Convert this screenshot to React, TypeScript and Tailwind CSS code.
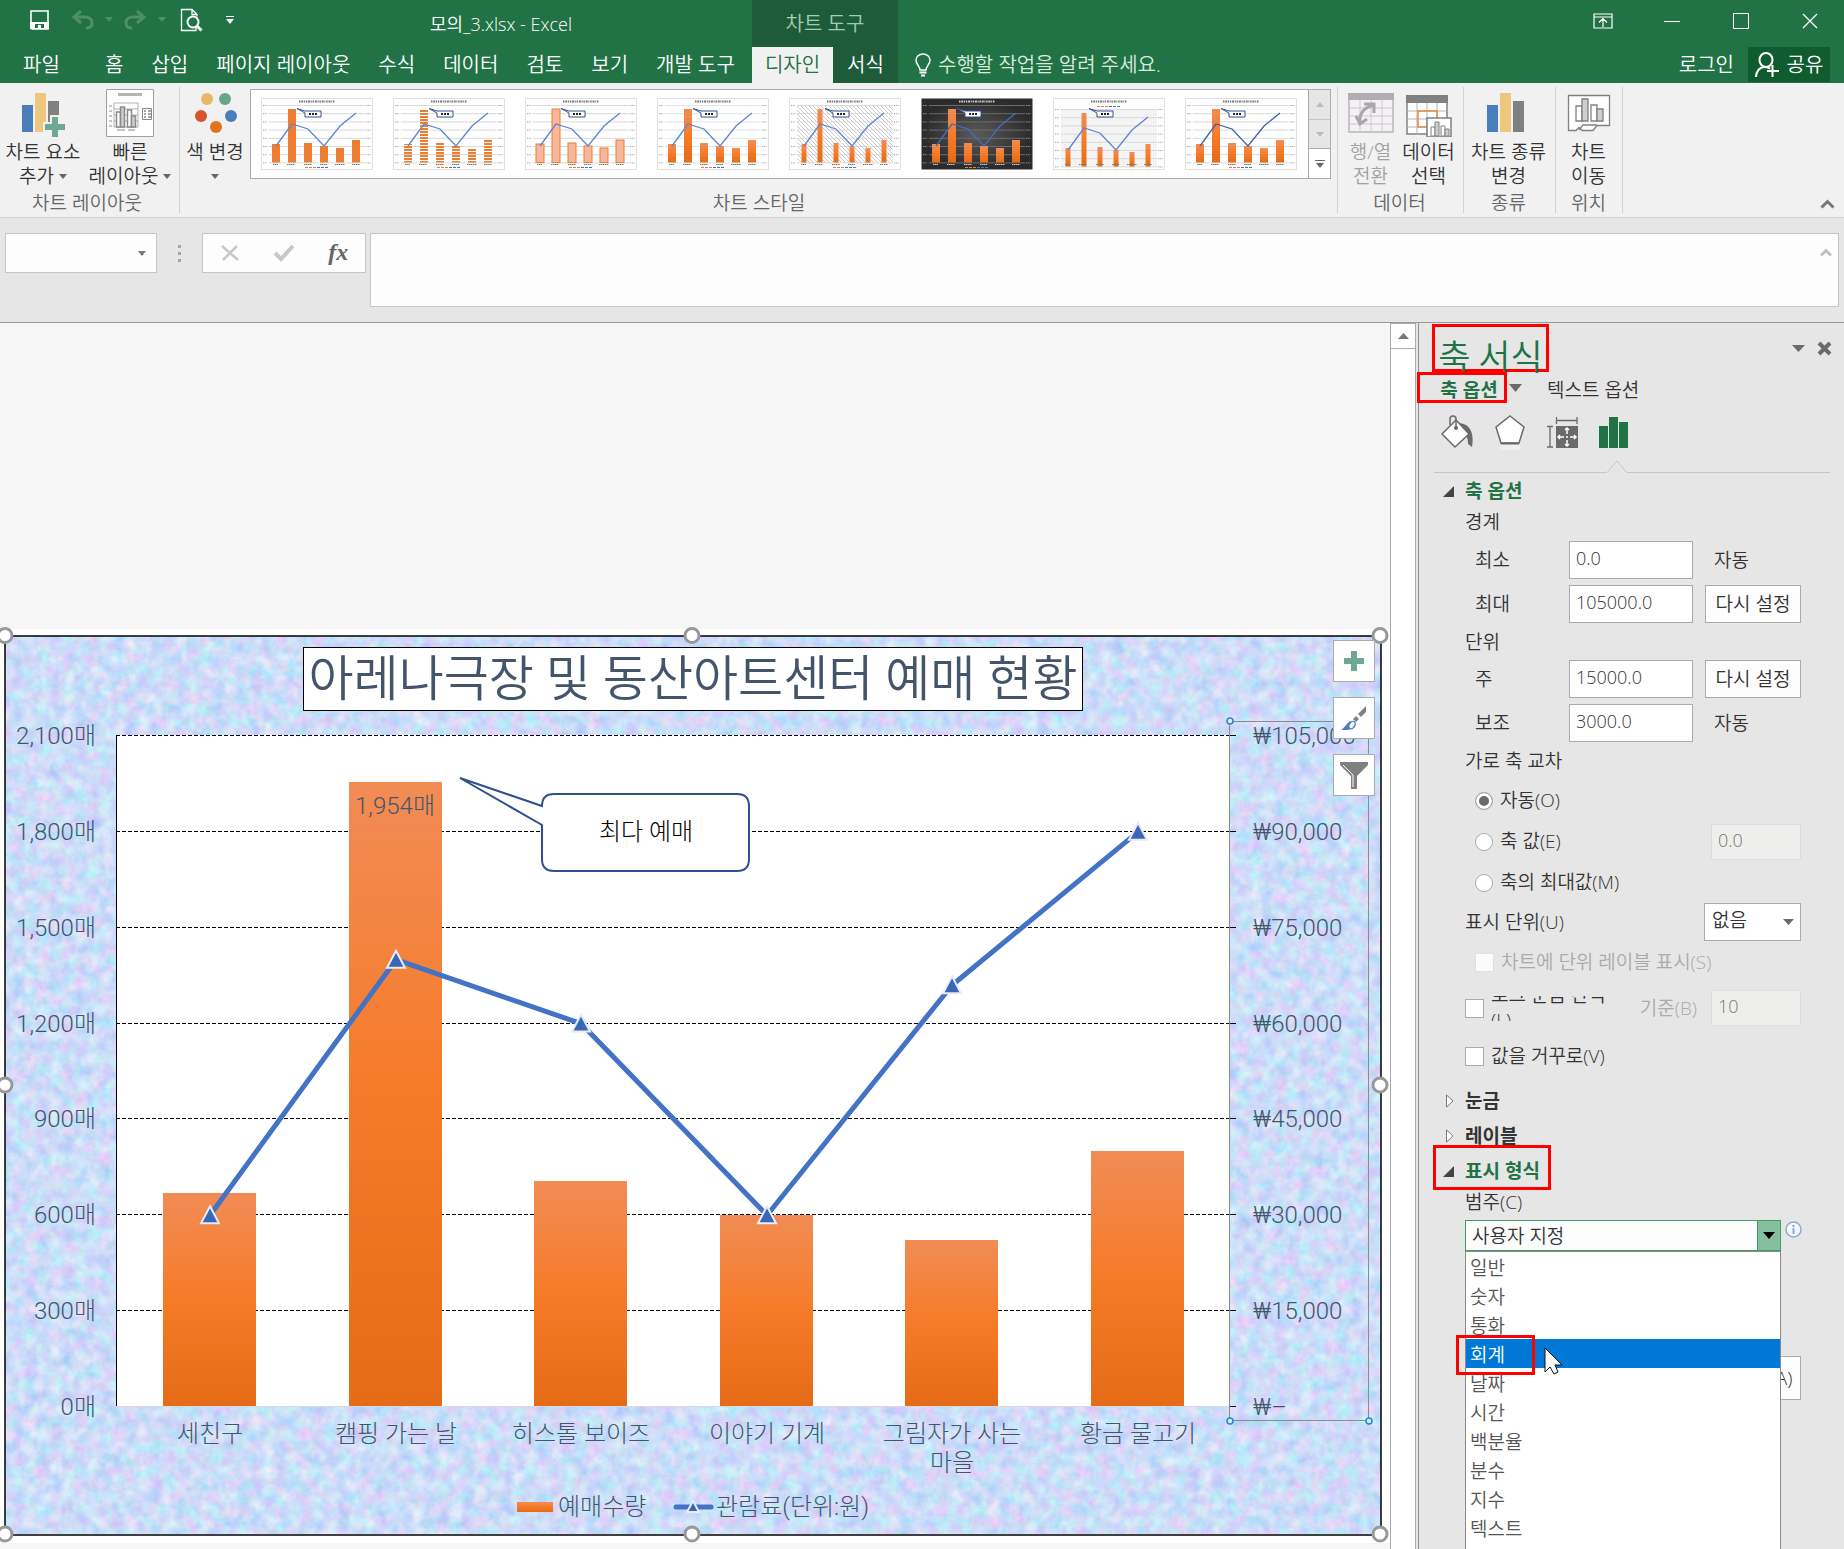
import { ReactNode } from 'react';

const tabs = ['홈', '삽입', '페이지 레이아웃', '수식', '데이터', '검토', '보기', '개발 도구'];

const categories = [
  { name: ['세친구'], qty: 667, fee: 30000 },
  { name: ['캠핑 가는 날'], qty: 1954, fee: 70000 },
  { name: ['히스톨 보이즈'], qty: 704, fee: 60000 },
  { name: ['이야기 기계'], qty: 598, fee: 30000 },
  { name: ['그림자가 사는', '마을'], qty: 520, fee: 66000 },
  { name: ['황금 물고기'], qty: 798, fee: 90000 },
];

const leftAxis = ['2,100매', '1,800매', '1,500매', '1,200매', '900매', '600매', '300매', '0매'];
const rightAxis = ['₩105,000', '₩90,000', '₩75,000', '₩60,000', '₩45,000', '₩30,000', '₩15,000', '₩–'];

const formats = ['일반', '숫자', '통화', '회계', '날짜', '시간', '백분율', '분수', '지수', '텍스트'];

// plot area inside the chart canvas
const plot = { left: 116, right: 1230, top: 106, bottom: 777 };
const plotHeight = plot.bottom - plot.top;
const centerX = (i: number) => 209 + Math.round(i * 185.5);
const qtyY = (v: number) => plot.bottom - (v / 2100) * plotHeight;
const feeY = (v: number) => plot.bottom - (v / 105000) * plotHeight;

function Caret({ className = '' }: { className?: string }) {
  return (
    <svg className={`shrink-0 ${className}`} width="8" height="5" viewBox="0 0 8 5" fill="currentColor" aria-hidden="true">
      <path d="M0 0h8L4 5z" />
    </svg>
  );
}

/* ---------- title bar ---------- */

function QuickAccess() {
  return (
    <div className="flex w-[250px] items-center pl-[28px] text-white">
      <button aria-label="저장" className="w-[43px]">
        <svg width="22" height="22" viewBox="0 0 22 22" fill="none">
          <path d="M3 2h17v18H4l-1-1z" stroke="#fff" strokeWidth="1.600" />
          <path d="M2 13h19v7H2z" fill="#fff" />
          <path d="M7 15h9v4H7z" fill="#217346" />
          <path d="M10 16h3v4h-3z" fill="#fff" />
        </svg>
      </button>
      <button aria-label="실행 취소" className="flex w-[53px] items-center gap-[11px] text-[#4d8f69]">
        <svg width="23" height="20" viewBox="0 0 23 20" fill="none" stroke="currentColor" strokeWidth="3">
          <path d="M10 1L3 7l7 6M4 7h10c4 0 7 2 7 6s-3 5-6 5" />
        </svg>
        <Caret />
      </button>
      <button aria-label="다시 실행" className="flex w-[56px] items-center gap-[11px] text-[#4d8f69]">
        <svg width="23" height="20" viewBox="0 0 23 20" fill="none" stroke="currentColor" strokeWidth="3">
          <path d="M13 1l7 6-7 6M19 7H9c-4 0-7 2-7 6s3 5 6 5" />
        </svg>
        <Caret />
      </button>
      <button aria-label="인쇄 미리 보기" className="w-[46px]">
        <svg width="23" height="24" viewBox="0 0 23 24" fill="none" stroke="#fff">
          <path d="M16 19v3.500H1.500V1.500H12l5 5v2M12 1.500v5h5" strokeWidth="1.300" />
          <circle cx="13" cy="14" r="5.500" fill="#217346" strokeWidth="2" />
          <path d="M17 18l4.500 4.500" strokeWidth="3" />
        </svg>
      </button>
      <button aria-label="빠른 실행 도구 모음 사용자 지정">
        <svg width="8" height="8" viewBox="0 0 8 8" fill="#fff">
          <path d="M0 0h8v1H0zM0 3h8L4 8z" />
        </svg>
      </button>
    </div>
  );
}

function WindowControls() {
  const cell = 'flex w-[69px] items-center justify-center';
  return (
    <div className="ml-auto flex pb-[6px]">
      <button aria-label="리본 메뉴 표시 옵션" className={cell}>
        <svg width="20" height="16" viewBox="0 0 20 16" fill="none" stroke="#fff" strokeWidth="1.200">
          <path d="M1 1h18v14H1zM1 4h18M10 14V6M6 9.500L10 5.500l4 4" />
        </svg>
      </button>
      <button aria-label="최소화" className={cell}>
        <svg width="16" height="16" viewBox="0 0 16 16" stroke="#fff"><path d="M0 8.500h16" /></svg>
      </button>
      <button aria-label="최대화" className={cell}>
        <svg width="16" height="16" viewBox="0 0 16 16" fill="none" stroke="#fff"><path d="M.5.5h15v15H.5z" /></svg>
      </button>
      <button aria-label="닫기" className={cell}>
        <svg width="16" height="16" viewBox="0 0 16 16" stroke="#fff" strokeWidth="1.300"><path d="M1 1l14 14M15 1L1 15" /></svg>
      </button>
    </div>
  );
}

function TitleBar() {
  return (
    <header className="bg-[#217346] text-white">
      <div className="flex h-[47px] items-stretch">
        <div className="flex w-[752px]">
          <div className="flex pb-2"><QuickAccess /></div>
          <h1 className="flex flex-1 items-center justify-center pt-[2px] text-[18px]">모의_3.xlsx - Excel</h1>
        </div>
        <div className="flex w-[146px] items-center justify-center bg-[#1e5c39] pt-px text-[20px] text-[#a3cdb2]">차트 도구</div>
        <WindowControls />
      </div>
      <div className="flex h-9 text-[20px]">
        <nav className="flex w-[752px] justify-between pr-1">
          <button className="mr-[7px] w-[83px]">파일</button>
          {tabs.map((tab) => (
            <button key={tab} className="px-[13px] whitespace-nowrap">{tab}</button>
          ))}
        </nav>
        <button className="w-[81px] bg-[#f1f1f1] text-[#217346]">디자인</button>
        <button className="w-[65px] bg-[#1e5c39]">서식</button>
        <button className="flex items-center gap-[6px] pl-4 text-[#d9eadf]">
          <svg width="18" height="24" viewBox="0 0 18 24" fill="none" stroke="#fff" strokeWidth="1.500">
            <path d="M6 17c0-4-4-5-4-10a7 6 0 0 1 14 0c0 5-4 6-4 10z" />
            <path d="M5.500 19.500h7M7 22.500h4" strokeWidth="2" />
          </svg>
          수행할 작업을 알려 주세요.
        </button>
        <div className="ml-auto flex pr-[14px]">
          <button className="px-[14px]">로그인</button>
          <button className="flex h-[35px] w-[82px] items-center justify-center gap-2 bg-[#0f5c2f]">
            <svg width="24" height="26" viewBox="0 0 24 26" fill="none" stroke="#fff" strokeWidth="2">
              <ellipse cx="11" cy="8" rx="6.500" ry="7" />
              <path d="M1 25c0-6 4-10 9-10 2 0 4 .5 5 2M17.500 13v12M12 19h12" />
            </svg>
            공유
          </button>
        </div>
      </div>
    </header>
  );
}

/* ---------- ribbon ---------- */

function BarsIcon({ plus = false }: { plus?: boolean }) {
  return (
    <svg width="46" height="46" viewBox="0 0 46 46" aria-hidden="true">
      <path d="M2 14h11v27H2z" fill="#4a7ebb" />
      <path d="M15 2h11v39H15z" fill="#edc77d" />
      <path d="M28 10h11v31H28z" fill="#808080" />
      {plus && <path d="M31 25h8v7h7v8h-7v7h-8v-7h-7v-8h7z" fill="#6fa890" stroke="#f1f1f1" strokeWidth="2" />}
    </svg>
  );
}

function LayoutIcon() {
  return (
    <svg width="48" height="48" viewBox="0 0 48 48" fill="none" stroke="#8a8a8a">
      <path d="M.5.5h47v47H.5z" fill="#fff" stroke="#a0a0a0" />
      <path d="M12 4h24v3H12z" fill="#b5b5b5" stroke="none" />
      <path d="M8 14h24v24H8zM8 20h24M8 26h24M8 32h24" stroke="#b0b0b0" />
      <path d="M10.500 23h4v15h-4zM21.500 21h4v17h-4z" fill="#fff" strokeWidth="1.500" />
      <path d="M14.500 18h4v20h-4zM25.500 27h4v11h-4z" fill="#cfcfcf" strokeWidth="1.500" />
      <path d="M3 17h3M3 22h3M3 27h3M3 32h3M3 37h3M11 41h8M22 41h7" strokeWidth="1" />
      <path d="M36.500 19.500h9v11h-9z" fill="#fff" />
      <path d="M38 22h2M42 22h3M38 25h2M42 25h3M38 28h2M42 28h3" strokeWidth="1.500" />
    </svg>
  );
}

function ColorsIcon() {
  return (
    <svg width="44" height="46" viewBox="0 0 44 46">
      <circle cx="14" cy="8" r="6" fill="#e9b765" />
      <circle cx="32" cy="8" r="6" fill="#66a58c" />
      <circle cx="8" cy="25" r="6" fill="#d9532c" />
      <circle cx="38" cy="25" r="6" fill="#4a7ebb" />
      <circle cx="23" cy="36" r="6" fill="#e27318" />
    </svg>
  );
}

function SwapIcon() {
  return (
    <svg width="46" height="46" viewBox="0 0 46 46" fill="none">
      <path d="M1 4h44v37H1z" fill="#f5f0f6" stroke="#b9b5ba" strokeWidth="1.500" />
      <path d="M0 2h46v7H0z" fill="#b1aeb1" />
      <path d="M1 17h44M1 25h44M1 33h44M12 9v32M23 9v32M34 9v32" stroke="#cdc6ce" />
      <path d="M12 32c-1-9 3-15 13-18" stroke="#aaa6aa" strokeWidth="3" />
      <path d="M16 13h10v9M8 25l4 8 7-5" stroke="#aaa6aa" strokeWidth="3" />
    </svg>
  );
}

function SelectDataIcon() {
  return (
    <svg width="46" height="46" viewBox="0 0 46 46" fill="none">
      <path d="M1 5h40v39H1z" fill="#fff" stroke="none" />
      <path d="M1 5h40v38H1z" stroke="#808080" strokeWidth="1.500" />
      <path d="M0 4h42v8H0z" fill="#808080" />
      <path d="M1 20h40M1 28h40M1 36h40M11 12v31M21 12v31M31 12v31" stroke="#b5b5b5" />
      <path d="M12 20h19v16H12z" stroke="#e38b41" strokeWidth="1.500" />
      <path d="M21 27h24v19H21z" fill="#fff" stroke="#808080" strokeWidth="1.500" />
      <path d="M25 36h4v9h-4zM35 35h4v10h-4z" fill="#fff" stroke="#808080" />
      <path d="M29 31h4v14h-4zM39 38h4v7h-4z" fill="#cfcfcf" stroke="#808080" />
    </svg>
  );
}

function MoveChartIcon() {
  return (
    <svg width="44" height="46" viewBox="0 0 44 46" fill="none" stroke="#808080" strokeWidth="1.300">
      <path d="M1.500 4.500h41v30H30l-4 5H15l-3-3-3 3H1.500z" fill="#fff" />
      <path d="M12 39l4-5h14" />
      <path d="M9 15h6v15H9zM24 14h6v16h-6z" fill="#fff" />
      <path d="M15 8h6v22h-6zM30 18h6v12h-6z" fill="#cfcfcf" />
    </svg>
  );
}

function RibbonButton({ icon, lines, caret, disabled, className = '' }: {
  icon: ReactNode;
  lines: string[];
  caret?: boolean;
  disabled?: boolean;
  className?: string;
}) {
  return (
    <button
      disabled={disabled}
      className={`flex h-[106px] flex-col items-center text-[19px] leading-6 whitespace-nowrap disabled:text-[#a2a2a2] ${className}`}
    >
      <span className="flex h-[57px] items-end pb-[3px]">{icon}</span>
      <span>{lines[0]}</span>
      <span className="flex h-6 items-center gap-[5px]">
        {lines[1]}
        {caret && <Caret className="text-[#666]" />}
      </span>
    </button>
  );
}

function RibbonGroup({ label, className = '', children }: { label: string; className?: string; children: ReactNode }) {
  return (
    <section className={`relative flex flex-col ${className}`}>
      <div className="flex justify-center">{children}</div>
      <div className="flex h-7 items-center justify-center pt-px text-[19px] text-[#666]">{label}</div>
      <span className="absolute top-1 right-0 bottom-1 w-px bg-[#d2d2d2]" />
    </section>
  );
}

type ThumbStyle = {
  bg?: string;
  grid?: string;
  bar?: string;
  stroke?: string;
  barWidth?: number;
  line?: string;
  plotFill?: string;
  ink?: string;
  legendTop?: boolean;
};

const thumbs: ThumbStyle[] = [
  { bar: '#ed7d31' },
  { bar: 'url(#stripes)' },
  { bar: '#f8b79a', stroke: '#ed7d31' },
  { bar: 'url(#orange)', grid: '#dfe5ee' },
  { bar: 'url(#orange)', barWidth: 5, plotFill: 'url(#hatch)' },
  { bar: 'url(#orange)', bg: 'url(#dark)', grid: '#6b6b6b', line: '#3f6ec4', ink: '#ccc' },
  { bar: 'url(#orange)', barWidth: 5, plotFill: '#f4f4f4', legendTop: true },
  { bar: 'url(#orange)', line: '#3a62ad' },
];

const thumbX = [15, 31, 47, 63, 79, 95];
const thumbTops = [46, 11, 45, 48, 50, 42];
const thumbLine = [48, 26, 31, 48, 28, 15];

function StyleThumb({ style, index }: { style: ThumbStyle; index: number }) {
  const { bg = '#fff', grid = '#d9d9d9', bar, stroke, barWidth = 8, line = '#5b86d6', plotFill = 'none', ink = '#777', legendTop } = style;
  const shift = legendTop ? 4 : 0;
  return (
    <button aria-label={`스타일 ${index + 1}`} className="shrink-0">
      <svg width="112" height="72" viewBox="0 0 112 72" fill="none">
        <rect x="0.500" y="0.500" width="111" height="71" fill={bg} stroke={style.bg ? 'none' : '#e0e0e0'} />
        <path d="M38 3.500h36" stroke={ink} strokeWidth="2" strokeDasharray="1.500 .8 2 .7 1 .8" />
        <rect x="8" y={7 + shift} width="96" height="58" fill={plotFill} />
        {Array.from({ length: 8 }, (_, i) => (
          <g key={i}>
            <path d={`M8 ${7.5 + shift + i * 8.2}h96`} stroke={grid} />
            <path d={`M2 ${7.5 + shift + i * 8.2}h4M105 ${7.5 + shift + i * 8.2}h5`} stroke={ink} strokeDasharray="1 .7" strokeOpacity="0.700" />
          </g>
        ))}
        {thumbX.map((x, i) => (
          <rect key={x} x={x - barWidth / 2} y={thumbTops[i] + shift} width={barWidth} height={64.5 - thumbTops[i]} fill={bar} stroke={stroke} />
        ))}
        <polyline points={thumbX.map((x, i) => `${x},${thumbLine[i] + shift}`).join(' ')} stroke={line} strokeWidth="1.300" />
        <path d="M36 10.500l8 2.500h16v6H44v-4z" fill="#fff" stroke="#2f528f" />
        <path d="M48 16h8" stroke="#222" strokeWidth="2" strokeDasharray="2 1" />
        <path d="M12 66.500h5M26 66.500h8M43 66.500h8M59 66.500h7M74 66.500h10M91 66.500h8" stroke={ink} strokeDasharray="1.500 .5" />
        <path d={legendTop ? 'M44 8.500h11' : 'M44 69.500h11'} stroke="#ed7d31" strokeDasharray="3 1" />
        <path d={legendTop ? 'M56 8.500h12' : 'M56 69.500h12'} stroke="#4472c4" strokeDasharray="3 1" />
      </svg>
    </button>
  );
}

function StyleGallery() {
  return (
    <div className="mt-[6px] mr-[7px] flex h-[90px] flex-1 border border-[#ababab] bg-white">
      <div className="flex min-w-0 flex-1 items-center gap-5 overflow-hidden pl-[10px]">
        {thumbs.map((style, i) => (
          <StyleThumb key={i} style={style} index={i} />
        ))}
      </div>
      <div className="flex w-[22px] flex-col border-l border-[#ababab] text-[#bdbdbd]">
        <button aria-label="위로" className="flex flex-1 items-center justify-center border-b border-[#c6c6c6] bg-[#e6e6e6]">
          <Caret className="rotate-180" />
        </button>
        <button aria-label="아래로" className="flex flex-1 items-center justify-center border-b border-[#ababab] bg-[#e6e6e6]">
          <Caret />
        </button>
        <button aria-label="자세히" className="flex flex-1 items-center justify-center">
          <svg width="10" height="8" viewBox="0 0 10 8" fill="#666"><path d="M0 0h10v1H0zM1 3h8L5 8z" /></svg>
        </button>
      </div>
    </div>
  );
}

function Ribbon() {
  return (
    <div className="flex h-[135px] border-b border-[#d2d2d2] bg-[#f1f1f1] text-[#333]">
      <RibbonGroup label="차트 레이아웃" className="w-[180px] pr-[6px]">
        <RibbonButton className="w-[86px]" icon={<BarsIcon plus />} lines={['차트 요소', '추가']} caret />
        <RibbonButton className="w-[88px]" icon={<LayoutIcon />} lines={['빠른', '레이아웃']} caret />
      </RibbonGroup>
      <RibbonGroup label="차트 스타일" className="min-w-0 flex-1">
        <RibbonButton className="w-[70px] shrink-0" icon={<ColorsIcon />} lines={['색 변경', '']} caret />
        <StyleGallery />
      </RibbonGroup>
      <RibbonGroup label="데이터" className="w-[126px] pr-[3px]">
        <RibbonButton className="w-[58px]" icon={<SwapIcon />} lines={['행/열', '전환']} disabled />
        <RibbonButton className="w-[58px]" icon={<SelectDataIcon />} lines={['데이터', '선택']} />
      </RibbonGroup>
      <RibbonGroup label="종류" className="w-[92px] pr-[3px]">
        <RibbonButton icon={<BarsIcon />} lines={['차트 종류', '변경']} />
      </RibbonGroup>
      <RibbonGroup label="위치" className="w-[67px] pr-[2px]">
        <RibbonButton icon={<MoveChartIcon />} lines={['차트', '이동']} />
      </RibbonGroup>
      <div className="flex w-[221px] items-end justify-end pr-[9px] pb-2">
        <button aria-label="리본 메뉴 축소">
          <svg width="15" height="10" viewBox="0 0 15 10" fill="none" stroke="#777" strokeWidth="3"><path d="M1.500 8.500l6-6 6 6" /></svg>
        </button>
      </div>
    </div>
  );
}

function FormulaBar() {
  return (
    <div className="flex h-[105px] items-start border-b border-[#9a9a9a] bg-[#e6e6e6] px-[5px] pt-[15px]">
      <div className="flex h-10 w-[152px] items-center border border-[#c6c6c6] bg-[#fdfdfd] pr-[10px]">
        <input aria-label="이름 상자" className="w-full min-w-0 bg-transparent px-2 outline-none" />
        <Caret className="text-[#777]" />
      </div>
      <div className="flex h-10 w-[45px] flex-col items-center justify-center gap-1">
        <span className="size-[3px] bg-[#a6a6a6]" />
        <span className="size-[3px] bg-[#a6a6a6]" />
        <span className="size-[3px] bg-[#a6a6a6]" />
      </div>
      <div className="flex h-10 w-[164px] items-center justify-around border border-[#c6c6c6] bg-[#fdfdfd]">
        <button aria-label="취소">
          <svg width="20" height="18" viewBox="0 0 20 18" stroke="#c8c8c8" strokeWidth="2.500"><path d="M2 2l16 14M17 2L3 16" /></svg>
        </button>
        <button aria-label="입력">
          <svg width="22" height="18" viewBox="0 0 22 18" fill="none" stroke="#c8c8c8" strokeWidth="4"><path d="M2 9l6 6L20 2" /></svg>
        </button>
        <button className="pb-[2px] font-['Liberation_Serif',serif] text-[24px] leading-none font-bold text-[#666] italic" aria-label="함수 삽입">fx</button>
      </div>
      <div className="ml-1 flex h-[74px] flex-1 items-start border border-[#c6c6c6] bg-[#fdfdfd]">
        <textarea aria-label="수식 입력줄" className="h-full flex-1 resize-none px-2 outline-none" />
        <button aria-label="수식 입력줄 축소" className="mt-[14px] mr-[6px]">
          <svg width="12" height="9" viewBox="0 0 12 9" fill="none" stroke="#c0c0c0" strokeWidth="3"><path d="M1 7.500l5-5 5 5" /></svg>
        </button>
      </div>
    </div>
  );
}

/* ---------- chart ---------- */

function Marker({ x, y, size = 9 }: { x: number; y: number; size?: number }) {
  return <path d={`M${x} ${y - size}l${size} ${size * 2 - 1}h${-size * 2}z`} fill="#3a66b8" stroke="#e8ecf4" strokeWidth="2" />;
}

function Chart() {
  const fees = categories.map((c, i) => ({ x: centerX(i) + 1, y: feeY(c.fee) + 1 }));
  const handles = [[5, 6.5], [692, 6.5], [1380, 6.5], [5, 456], [1380, 456], [5, 905], [692, 905], [1380, 905]];
  return (
    <svg viewBox="0 0 1390 914" className="block w-full overflow-visible bg-white font-['Roboto','Noto_Sans_CJK_KR',sans-serif]" role="img" aria-label="아레나극장 및 동산아트센터 예매 현황">
      <defs>
        <linearGradient id="orange" x1="0" y1="0" x2="0" y2="1">
          <stop offset="0" stopColor="#f18c55" />
          <stop offset="0.500" stopColor="#f67b28" />
          <stop offset="1" stopColor="#e56b17" />
        </linearGradient>
        <radialGradient id="dark">
          <stop offset="0" stopColor="#5a5a5a" />
          <stop offset="1" stopColor="#2b2b2b" />
        </radialGradient>
        <pattern id="stripes" width="4" height="3" patternUnits="userSpaceOnUse">
          <path d="M0 0h4v2H0z" fill="#ed7d31" />
        </pattern>
        <pattern id="hatch" width="4" height="4" patternUnits="userSpaceOnUse">
          <path d="M0 0l4 4" stroke="#ccc" />
        </pattern>
        {/* bouquet paper texture */}
        <filter id="paper" x="0" y="0" width="100%" height="100%" colorInterpolationFilters="sRGB">
          <feTurbulence type="fractalNoise" baseFrequency="0.080" numOctaves="5" seed="7" />
          <feColorMatrix values="0.380 0 0 0 0.610  0 0.260 0 0 0.735  0 0 0.060 0 0.945  0 0 0 0 1" />
        </filter>
      </defs>

      <rect x="5" y="7" width="1376" height="898" filter="url(#paper)" />
      <rect x="5" y="7" width="1376" height="899" fill="none" stroke="#000" strokeWidth="1.500" />

      <rect x="303.500" y="18.500" width="779" height="63" fill="#fff" stroke="#000" />
      <text x="693" y="67" textAnchor="middle" fontSize="49" fill="#44546a">
        아레나극장 및 동산아트센터 예매 현황
      </text>

      <rect x={plot.left} y={plot.top} width={plot.right - plot.left} height={plotHeight} fill="#fff" />
      <g stroke="#000" strokeDasharray="4 2">
        {leftAxis.slice(0, 7).map((label, i) => (
          <path key={label} d={`M${plot.left} ${Math.round(plot.top + (i * plotHeight) / 7) + 0.5}H1230`} />
        ))}
      </g>
      <path d={`M${plot.left + 0.5} ${plot.top}V${plot.bottom}`} stroke="#000" />
      <path d={`M${plot.left} ${plot.bottom + 0.5}H${plot.right}`} stroke="#d9d9d9" />
      {rightAxis.map((label, i) => (
        <path key={label} d={`M1230 ${Math.round(plot.top + (i * plotHeight) / 7) + 0.5}h6`} stroke="#000" />
      ))}

      {categories.map((c, i) => (
        <rect key={c.qty} x={centerX(i) - 46} y={Math.round(qtyY(c.qty))} width="93" height={plot.bottom - Math.round(qtyY(c.qty))} fill="url(#orange)" />
      ))}
      <polyline points={fees.map((p) => `${p.x},${p.y}`).join(' ')} fill="none" stroke="#4472c4" strokeWidth="5" strokeLinejoin="round" />
      {fees.map((p) => (
        <Marker key={p.x} x={p.x} y={p.y} />
      ))}

      <path
        d="M460 149L542 177q0-12 12-12h183q12 0 12 12v53q0 12-12 12H554q-12 0-12-12V196z"
        fill="#fff"
        stroke="#2f528f"
        strokeWidth="2"
      />

      <g fontSize="24" fill="#44546a" className="font-light">
        {leftAxis.map((label, i) => (
          <text key={label} x="96" y={plot.top + 9 + (i * plotHeight) / 7} textAnchor="end">{label}</text>
        ))}
        {rightAxis.map((label, i) => (
          <text key={label} x="1253" y={plot.top + 9 + (i * plotHeight) / 7}>{label}</text>
        ))}
        {categories.map((c, i) => (
          <text key={c.qty} y="813" textAnchor="middle">
            {c.name.map((line, row) => (
              <tspan key={line} x={centerX(i) + 1} dy={row * 29}>{line}</tspan>
            ))}
          </text>
        ))}
        <text x="395" y="185" textAnchor="middle">1,954매</text>
        <text x="646" y="211" textAnchor="middle" fill="#000">최다 예매</text>
        <rect x="517" y="873" width="36" height="10" fill="url(#orange)" />
        <text x="558" y="886">예매수량</text>
        <path d="M676 878h35" stroke="#4472c4" strokeWidth="5" strokeLinecap="round" />
        <Marker x={693} y={878} size={6} />
        <text x="716" y="886">관람료(단위:원)</text>
      </g>

      {/* selected value axis */}
      <rect x="1229.500" y="92.500" width="139" height="699" fill="none" stroke="#8c8c8c" />
      <g fill="#dbe9f7" stroke="#1e8ad6" strokeWidth="1.500">
        <circle cx="1230" cy="92" r="3" />
        <circle cx="1230" cy="792" r="3" />
        <circle cx="1369" cy="792" r="3" />
      </g>

      {handles.map(([x, y]) => (
        <circle key={`${x}-${y}`} cx={x} cy={y} r="7" fill="#fff" stroke="#999" strokeWidth="3" />
      ))}
    </svg>
  );
}

function ChartButtons() {
  const box = 'flex size-[42px] items-center justify-center border border-[#ababab] bg-white';
  return (
    <div className="absolute top-[11px] right-[15px] flex flex-col gap-[15px]">
      <button aria-label="차트 요소" className={box}>
        <svg width="20" height="20" viewBox="0 0 20 20" fill="#6fa890"><path d="M7 0h6v7h7v6h-7v7H7v-7H0V7h7z" /></svg>
      </button>
      <button aria-label="차트 스타일" className={box}>
        <svg width="28" height="28" viewBox="0 0 28 28">
          <path d="M26 2v6l-5 5-3-3z" fill="#808080" />
          <path d="M16 12l3 3-3 3-3-3z" fill="#808080" />
          <path d="M1 26c3-2 4-4 6-6 2-3 5-4 8-2 2 3 0 6-3 7-3 1-7 1-11 1z" fill="#4a7ebb" />
          <ellipse cx="12" cy="21" rx="2.500" ry="4" fill="#fff" stroke="#4a7ebb" transform="rotate(30 12 21)" />
        </svg>
      </button>
      <button aria-label="차트 필터" className={box}>
        <svg width="28" height="28" viewBox="0 0 28 28" fill="#808080">
          <path d="M0 1h28v3L17 15v13h-6V15L0 4z" />
          <path d="M3 4l10 10v12" fill="none" stroke="#fff" />
        </svg>
      </button>
    </div>
  );
}

function Sheet() {
  return (
    <main className="flex min-w-0 flex-1 bg-[#f6f6f6]">
      <div className="min-w-0 flex-1 pt-[306px]">
        <div className="relative">
          <Chart />
          <ChartButtons />
        </div>
      </div>
      <div className="w-[26px] border-x border-[#ababab] bg-white">
        <button aria-label="위로 스크롤" className="flex h-[26px] w-full items-center justify-center border-y border-[#ababab] text-[#777]">
          <svg width="11" height="6" viewBox="0 0 11 6" fill="currentColor"><path d="M5.500 0L11 6H0z" /></svg>
        </button>
      </div>
      <div className="w-[3px] border-r border-[#8f8f8f] bg-[#e6e6e6]" />
    </main>
  );
}

/* ---------- format pane ---------- */

function SectionHead({ title, open, marked }: { title: string; open?: boolean; marked?: boolean }) {
  return (
    <h3 className="relative -ml-[22px] flex h-[35px] items-center pt-px">
      <button className={`flex items-center font-bold ${open ? 'text-[#217346]' : 'text-[#333]'}`}>
        {open ? (
          <svg className="mr-[11px]" width="11" height="11" viewBox="0 0 11 11" fill="#444"><path d="M11 0v11H0z" /></svg>
        ) : (
          <svg className="mr-[11px] ml-[3px]" width="8" height="14" viewBox="0 0 8 14" fill="#fff" stroke="#777"><path d="M.5 1v12L7 7z" /></svg>
        )}
        {title}
      </button>
      {marked && <span className="absolute -top-2 -left-[10px] h-[45px] w-[118px] border-[3px] border-[#ff0000]" />}
    </h3>
  );
}

function BoundRow({ id, label, value, reset }: { id: string; label: string; value: string; reset?: boolean }) {
  return (
    <div className="flex h-[38px] items-center pl-[10px]">
      <label htmlFor={id} className="w-[94px]">{label}</label>
      <input id={id} defaultValue={value} className="h-[38px] w-[124px] border border-[#ababab] bg-white px-[6px] pb-1 text-[18px]" />
      {reset ? (
        <button className="ml-3 h-[38px] w-[96px] border border-[#ababab] bg-[#fdfdfd]">다시 설정</button>
      ) : (
        <span className="ml-[21px]">자동</span>
      )}
    </div>
  );
}

function Radio({ label, checked, children }: { label: string; checked?: boolean; children?: ReactNode }) {
  return (
    <div className="flex h-[41px] items-center justify-between pl-[10px]">
      <label className="flex items-center gap-[7px]">
        <input
          type="radio"
          name="cross"
          defaultChecked={checked}
          className="size-[18px] appearance-none rounded-full border border-[#ababab] bg-white checked:bg-[#6a6a6a] checked:shadow-[inset_0_0_0_3px_#fff]"
        />
        {label}
      </label>
      {children}
    </div>
  );
}

const disabledInput = 'h-9 w-[90px] border border-[#dcdcdc] bg-[#eeeeec] px-[6px] pb-1 text-[18px] text-[#777]';
const checkbox = 'size-[19px] shrink-0 appearance-none border border-[#ababab] bg-white disabled:border-[#e0e0e0] disabled:bg-[#fbfbfb]';

function PaneIcons() {
  return (
    <div className="flex h-[57px] items-center pl-[22px]">
      <button aria-label="채우기 및 선" className="w-[54px]">
        <svg width="33" height="34" viewBox="0 0 33 34" fill="none" stroke="#6a6a6a">
          <path d="M17 8c9 0 17 6 14 24l-4-3c0-6-2-10-6-13z" fill="#6a6a6a" stroke="none" />
          <path d="M15 5l13 14-14 13L1 19z" fill="#fff" strokeWidth="1.500" />
          <path d="M9 10V4c0-4 6-4 6 0v8" strokeWidth="1.500" />
          <circle cx="15" cy="13" r="2" fill="#6a6a6a" stroke="none" />
        </svg>
      </button>
      <button aria-label="효과" className="w-[51px]">
        <svg width="30" height="36" viewBox="0 0 30 36" fill="none">
          <path d="M15 2l14 11-5 16H6L1 13z" fill="#fff" stroke="#6a6a6a" strokeWidth="1.500" />
          <path d="M6 30h18l2 6H4z" fill="#efefef" />
          <path d="M6 29.500h18" stroke="#6a6a6a" strokeWidth="2" />
        </svg>
      </button>
      <button aria-label="크기 및 속성" className="w-[53px]">
        <svg width="32" height="32" viewBox="0 0 32 32" fill="none" stroke="#6a6a6a" strokeWidth="1.300">
          <path d="M10 10h22v22H10z" fill="#6a6a6a" stroke="none" />
          <path d="M10.500 1v7M31 1v7M11 4.500h20M1 10.500h6M1 31h6M4 11v20" />
          <path d="M21 12v6M21 24v6M12 21h6M24 21h6M20 21h2M19 14l2-2 2 2M19 28l2 2 2-2M14 19l-2 2 2 2M28 19l2 2-2 2" stroke="#fff" strokeWidth="1.500" />
        </svg>
      </button>
      <button aria-label="축 옵션">
        <svg width="30" height="32" viewBox="0 0 30 32" fill="#217346"><path d="M0 10h9v22H0zM10 1h9v31h-9zM20 6h9v26h-9z" /></svg>
      </button>
    </div>
  );
}

function CategoryPicker() {
  return (
    <div className="relative h-[31px] w-[316px]">
      <select
        id="category"
        className="h-[31px] w-full appearance-none border border-[#3f9a63] bg-[#fdfdfd] pl-[6px] leading-[26px] text-[#333]"
      >
        <option>사용자 지정</option>
      </select>
      <span className="pointer-events-none absolute inset-y-0 right-0 flex w-6 items-center justify-center border border-[#3f9a63] bg-[#86bf9e]">
        <svg width="12" height="7" viewBox="0 0 12 7"><path d="M0 0h12L6 7z" /></svg>
      </span>
      <svg className="absolute top-px -right-[21px]" width="17" height="17" viewBox="0 0 17 17" fill="none">
        <circle cx="8.500" cy="8.500" r="7.500" fill="#f5f8fc" stroke="#8fa9d6" strokeWidth="1.500" />
        <path d="M8.500 7v6M8.500 4v2" stroke="#8fa9d6" strokeWidth="2" />
      </svg>
      <ul role="listbox" aria-label="범주" className="absolute top-full z-10 w-full border border-[#8a8a8a] bg-white pb-8">
        {formats.map((name) => (
          <li
            key={name}
            role="option"
            aria-selected={name === '회계'}
            className="relative h-[29px] pl-1 leading-8 text-[#555] aria-selected:bg-[#0078d7] aria-selected:text-white"
          >
            {name}
            {name === '회계' && (
              <>
                <span className="absolute -top-1 -left-[10px] h-10 w-[79px] border-[3px] border-[#ff0000]" />
                <svg className="absolute top-2 left-[78px]" width="19" height="28" viewBox="0 0 19 28" fill="#fff" stroke="#111">
                  <path d="M1 1v24l5-5 4 7 4-2-3-7h7z" />
                </svg>
              </>
            )}
          </li>
        ))}
      </ul>
    </div>
  );
}

function FormatPane() {
  return (
    <aside className="w-[425px] shrink-0 bg-[#e6e6e6] text-[19px] text-[#333]">
      <div className="flex items-start justify-between pt-px pr-3 pl-[13px]">
        <h2 className="flex h-[48px] w-[117px] items-center justify-center border-[3px] border-[#ff0000] pt-3 font-['Noto_Sans_CJK_KR',sans-serif] text-[35px] leading-none whitespace-nowrap text-[#217346]">
          축 서식
        </h2>
        <div className="mt-[17px] flex items-center gap-3">
          <button aria-label="작업창 옵션">
            <svg width="13" height="7" viewBox="0 0 13 7" fill="#6a6a6a"><path d="M0 0h13L6.500 7z" /></svg>
          </button>
          <button aria-label="닫기">
            <svg width="15" height="15" viewBox="0 0 15 15" stroke="#6a6a6a" strokeWidth="4"><path d="M2 2l11 11M13 2L2 13" /></svg>
          </button>
        </div>
      </div>
      <div className="flex h-[31px] items-center">
        <button className="-ml-[2px] h-[31px] w-[90px] border-[3px] border-[#ff0000] pl-[14px] leading-[30px] font-bold whitespace-nowrap text-[#217346]">축 옵션</button>
        <svg className="ml-[2px]" width="13" height="8" viewBox="0 0 13 8" fill="#6a6a6a"><path d="M0 0h13L6.500 8z" /></svg>
        <button className="ml-[25px] pt-[6px]">텍스트 옵션</button>
      </div>
      <PaneIcons />
      <div className="flex items-end pr-[14px] pl-[15px]">
        <span className="w-[173px] border-b border-[#c6c6c6]" />
        <svg width="20" height="13" viewBox="0 0 20 13" fill="none" stroke="#c6c6c6"><path d="M0 12.500L10 1l10 11.500" /></svg>
        <span className="flex-1 border-b border-[#c6c6c6]" />
      </div>

      <div className="pr-[43px] pl-[46px]">
        <SectionHead title="축 옵션" open />
        <p className="mb-1 h-[29px] leading-[29px]">경계</p>
        <BoundRow id="min" label="최소" value="0.0" />
        <div className="h-[6px]" />
        <BoundRow id="max" label="최대" value="105000.0" reset />
        <p className="h-[37px] leading-[38px]">단위</p>
        <BoundRow id="major" label="주" value="15000.0" reset />
        <div className="h-[6px]" />
        <BoundRow id="minor" label="보조" value="3000.0" />
        <p className="h-[38px] leading-[38px]">가로 축 교차</p>
        <Radio label="자동(O)" checked />
        <Radio label="축 값(E)">
          <input aria-label="축 값" disabled defaultValue="0.0" className={disabledInput} />
        </Radio>
        <Radio label="축의 최대값(M)" />
        <div className="flex h-[38px] items-center justify-between">
          <label htmlFor="unit">표시 단위(U)</label>
          <span className="relative">
            <select id="unit" className="h-[38px] w-[97px] appearance-none border border-[#ababab] bg-white pb-1 pl-[7px]">
              <option>없음</option>
            </select>
            <svg className="pointer-events-none absolute top-[16px] right-[7px]" width="11" height="6" viewBox="0 0 11 6" fill="#6a6a6a">
              <path d="M0 0h11L5.500 6z" />
            </svg>
          </span>
        </div>
        <label className="flex h-[42px] items-center gap-[7px] pl-[10px] text-[#aaa]">
          <input type="checkbox" disabled className={checkbox} />
          차트에 단위 레이블 표시(S)
        </label>
        <div className="flex h-[50px] items-center">
          <label className="flex w-[150px] items-center gap-[7px]">
            <input type="checkbox" className={checkbox} />
            <span className="flex h-[25px] w-[120px] items-center overflow-hidden leading-[25px]">로그 눈금 간격 (L)</span>
          </label>
          <label htmlFor="base" className="ml-auto pr-[14px] text-[#aaa]">기준(B)</label>
          <input id="base" disabled defaultValue="10" className={disabledInput} />
        </div>
        <label className="flex h-[46px] items-center gap-[7px]">
          <input type="checkbox" className={checkbox} />
          값을 거꾸로(V)
        </label>
        <div className="h-1" />
        <SectionHead title="눈금" />
        <SectionHead title="레이블" />
        <SectionHead title="표시 형식" open marked />
        <label htmlFor="category" className="block h-8 leading-7">범주(C)</label>
        <CategoryPicker />
        <div className="flex justify-end pt-[105px]">
          <button className="h-[44px] w-[90px] border border-[#ababab] bg-[#fdfdfd] pl-4">추가(A)</button>
        </div>
      </div>
    </aside>
  );
}

export default function App() {
  return (
    <div className="flex h-screen flex-col overflow-hidden font-['Open_Sans','Noto_Sans_CJK_KR',sans-serif] font-[350]">
      <TitleBar />
      <Ribbon />
      <FormulaBar />
      <div className="flex min-h-0 flex-1 overflow-hidden">
        <Sheet />
        <FormatPane />
      </div>
    </div>
  );
}
